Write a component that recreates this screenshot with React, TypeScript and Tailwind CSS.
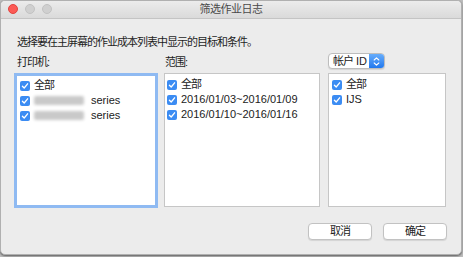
import React from "react";

const Check: React.FC = () => (
  <span className="w-[10px] h-[10px] rounded-[2px] bg-[#3b8cf3] flex items-center justify-center shrink-0">
    <svg width="8" height="8" viewBox="0 0 8 8" fill="none">
      <path d="M1.4 4.2 L3.2 6 L6.6 1.8" stroke="white" strokeWidth="1.3" strokeLinecap="round" strokeLinejoin="round" />
    </svg>
  </span>
);

const Row: React.FC<{ children: React.ReactNode }> = ({ children }) => (
  <div className="h-[15px] flex items-center gap-[4px] text-[11px] text-[#222]">
    <Check />
    {children}
  </div>
);

const Blurred: React.FC = () => (
  <span className="inline-block w-[50px] h-[9px] rounded-[2px] bg-[#c9c9c9] blur-[1.5px] mr-[3px]"></span>
);

const App: React.FC = () => {
  return (
    <div className="w-[463px] h-[257px] bg-[#bdbdbd] font-['Liberation_Sans','Noto_Sans_CJK_SC',sans-serif]">
      <div className="w-[462px] h-[255px] bg-[#ececec] rounded-[5px] overflow-hidden flex flex-col border border-[#b0b0b0] shadow-[0_1px_2px_rgba(0,0,0,0.5)]">
        {/* TITLE BAR */}
        <div className="relative h-[18px] shrink-0 bg-gradient-to-b from-[#ececec] to-[#dadada] border-b border-[#c4c4c4] flex items-center justify-center">
          <div className="absolute left-[7px] top-[3px] flex gap-[7px]">
            <span className="w-[10px] h-[10px] rounded-full bg-[#fc5a55] border border-[#e2443f]"></span>
            <span className="w-[10px] h-[10px] rounded-full bg-[#d0d0d0] border border-[#c2c2c2]"></span>
            <span className="w-[10px] h-[10px] rounded-full bg-[#d0d0d0] border border-[#c2c2c2]"></span>
          </div>
          <span className="text-[11px] tracking-[-0.5px] text-[#4a4a4a]">筛选作业日志</span>
        </div>

        {/* CONTENT */}
        <div className="flex-1 pl-[13px] pt-[16px]">
          <p className="h-[14px] leading-[14px] pl-[3px] text-[11px] tracking-[-1px] text-[#1e1e1e]">
            选择要在主屏幕的作业成本列表中显示的目标和条件。
          </p>

          <div className="mt-[4px] flex">
            {/* PRINTERS */}
            <div className="w-[144px] flex flex-col">
              <div className="h-[16px] flex items-end pl-[3px] text-[11px] tracking-[-1px] text-[#1e1e1e] leading-[14px]">打印机:</div>
              <div className="mt-[4px] h-[135px] bg-white border-[3px] border-[#8fbaf2] pl-[3px] pt-[2px]">
                <Row><span className="tracking-[-1px]">全部</span></Row>
                <Row><Blurred />series</Row>
                <Row><Blurred />series</Row>
              </div>
            </div>

            {/* RANGE */}
            <div className="w-[156px] ml-[6px] flex flex-col">
              <div className="h-[16px] flex items-end pl-[1px] text-[11px] tracking-[-1px] text-[#1e1e1e] leading-[14px]">范围:</div>
              <div className="mt-[4px] h-[134px] bg-white border border-[#c6c6c6] pl-[2px] pt-[3px]">
                <Row><span className="tracking-[-1px]">全部</span></Row>
                <Row>2016/01/03~2016/01/09</Row>
                <Row>2016/01/10~2016/01/16</Row>
              </div>
            </div>

            {/* ACCOUNT */}
            <div className="w-[118px] ml-[8px] flex flex-col">
              <div className="h-[16px] w-[57px] flex rounded-[4px] border border-[#bdbdbd] bg-white overflow-hidden shadow-[0_1px_1px_rgba(0,0,0,0.1)]">
                <div className="flex-1 flex items-center pl-[4px] text-[11px] text-[#222]">
                  <span className="tracking-[-1px]">帐户</span>
                  <span className="ml-[3px]">ID</span>
                </div>
                <div className="w-[15px] bg-gradient-to-b from-[#67adfb] to-[#1f78ee] flex items-center justify-center">
                  <svg width="7" height="11" viewBox="0 0 7 11" fill="none">
                    <path d="M1.2 4 L3.5 1.8 L5.8 4" stroke="white" strokeWidth="1.1" strokeLinecap="round" strokeLinejoin="round" />
                    <path d="M1.2 7 L3.5 9.2 L5.8 7" stroke="white" strokeWidth="1.1" strokeLinecap="round" strokeLinejoin="round" />
                  </svg>
                </div>
              </div>
              <div className="mt-[4px] h-[134px] bg-white border border-[#c6c6c6] pl-[3px] pt-[3px]">
                <Row><span className="tracking-[-1px]">全部</span></Row>
                <Row>IJS</Row>
              </div>
            </div>
          </div>

          {/* BUTTONS */}
          <div className="mt-[15px] w-[433px] flex justify-end gap-[11px]">
            <button className="w-[64px] h-[17px] rounded-[4px] bg-white border border-[#c2c2c2] shadow-[0_1px_1px_rgba(0,0,0,0.1)] text-[11px] tracking-[-1px] text-[#222] leading-none">
              取消
            </button>
            <button className="w-[64px] h-[17px] rounded-[4px] bg-white border border-[#c2c2c2] shadow-[0_1px_1px_rgba(0,0,0,0.1)] text-[11px] tracking-[-1px] text-[#222] leading-none">
              确定
            </button>
          </div>
        </div>
      </div>
    </div>
  );
};

export default App;
